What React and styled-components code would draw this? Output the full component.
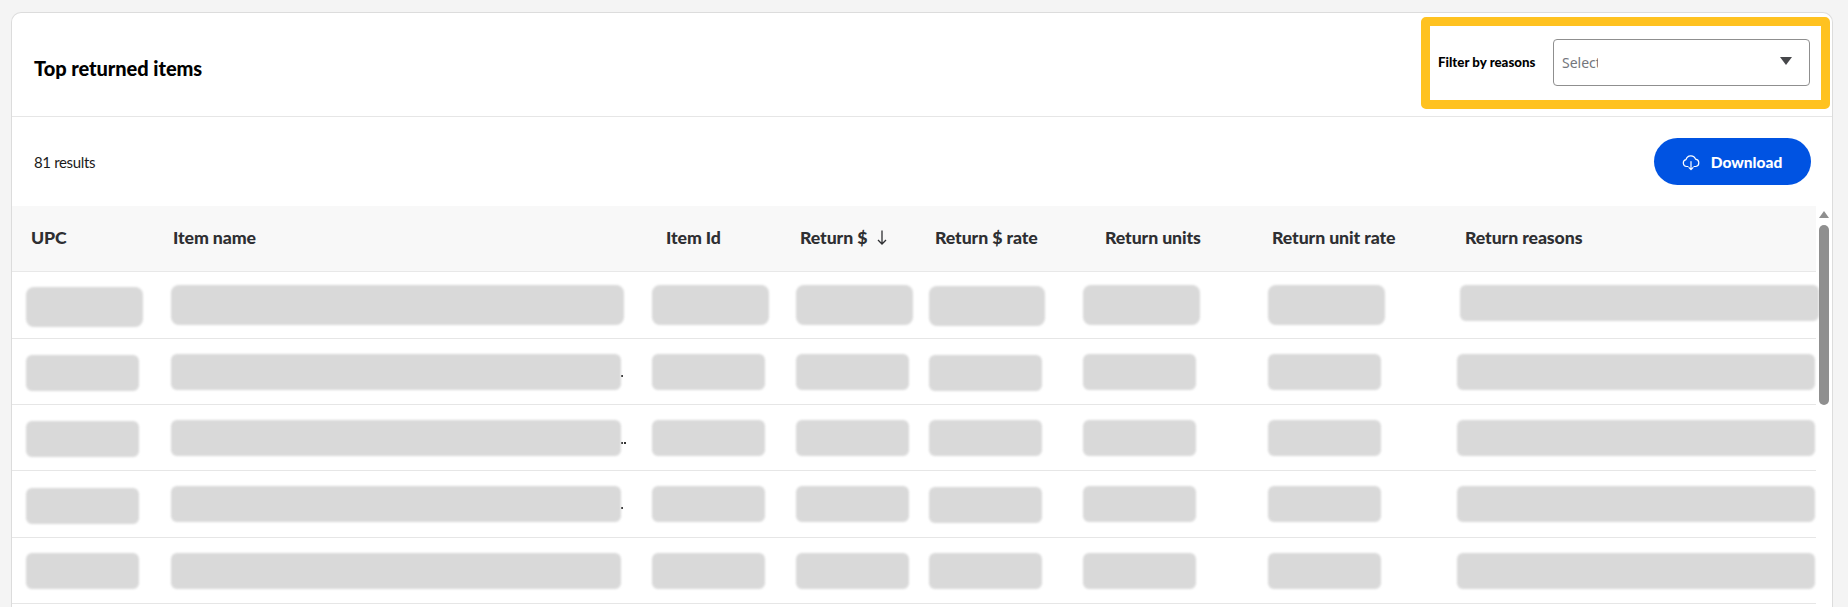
import React from "react";
import styled, { createGlobalStyle } from "styled-components";

const Global = createGlobalStyle`
  html, body { margin: 0; padding: 0; height: 607px; overflow: hidden; background: #f4f4f4; }
  body { font-family: Lato, "Noto Sans", sans-serif; color: #2e2f32; }
  * { box-sizing: border-box; }
`;

const Page = styled.div`
  padding: 12px 16px 0 11px;
  height: 607px;
  overflow: hidden;
`;
const Card = styled.section`
  background: #fff;
  border: 1.5px solid #dcdcdc;
  border-bottom: 0;
  border-radius: 10px 10px 0 0;
  width: 1822px;
  height: 640px;
`;
const Header = styled.header`
  display: flex;
  justify-content: space-between;
  align-items: center;
  height: 104px;
  padding: 0 2px 0 22px;
  border-bottom: 1.5px solid #e6e6e6;
`;
const Title = styled.h2`
  margin: 6px 0 0;
  font-size: 20px;
  font-weight: 900;
  letter-spacing: -0.05px;
  color: #000;
`;
const FilterBox = styled.div`
  display: flex;
  align-items: center;
  width: 409px;
  height: 92px;
  margin-top: -4px;
  padding: 0 10px 1px 8px;
  border: 9px solid #ffc220;
  border-radius: 5px;
  background: #fff;
`;
const FilterLabel = styled.label`
  width: 115px;
  flex: none;
  font-size: 13.3px;
  font-weight: 900;
  color: #000;
`;
const SelectBox = styled.div`
  display: flex;
  flex: none;
  align-items: center;
  justify-content: space-between;
  width: 257px;
  height: 47px;
  padding: 0 17px 0 8px;
  border: 1px solid #8f8f8f;
  border-radius: 4px;
`;
const Placeholder = styled.span`
  width: 36px;
  overflow: hidden;
  white-space: nowrap;
  font-family: "Noto Sans", sans-serif;
  font-size: 14px;
  color: #74767c;
`;
const Caret = styled.svg`
  margin-bottom: 2px;
`;
const Toolbar = styled.div`
  display: flex;
  justify-content: space-between;
  align-items: center;
  height: 89px;
  padding: 0 21px 0 22px;
`;
const Results = styled.span`
  font-size: 15px;
  letter-spacing: -0.35px;
  color: #1a1a1a;
`;
const DownloadButton = styled.button`
  display: flex;
  align-items: center;
  justify-content: center;
  gap: 11px;
  width: 157px;
  height: 47px;
  padding: 0 1px 0 0;
  border: 0;
  border-radius: 24px;
  background: #0053e2;
  color: #fff;
  font-family: Lato, sans-serif;
  font-size: 15.5px;
  font-weight: 900;
`;
const TableArea = styled.div`
  display: flex;
  align-items: flex-start;
`;
const Table = styled.div`
  width: 1804px;
  flex: none;
`;
const HeadRow = styled.div`
  display: grid;
  grid-template-columns: 142px 493px 134px 135px 170px 167px 193px 1fr;
  align-items: center;
  height: 66px;
  padding: 0 0 3px 19px;
  background: #f8f8f8;
  border-bottom: 1.5px solid #e8e8e8;
`;
const HeadCell = styled.div`
  display: flex;
  align-items: center;
  gap: 10px;
  font-size: 17.7px;
  font-weight: 900;
  color: #2e2f32;
  letter-spacing: -0.1px;
  white-space: nowrap;
`;
const Row = styled.div`
  display: flex;
  align-items: flex-start;
  height: ${(p) => p.$height}px;
  border-bottom: 1.5px solid #e6e6e6;
`;
const Block = styled.div`
  flex: none;
  width: ${(p) => p.$w}px;
  height: ${(p) => p.$h}px;
  margin-left: ${(p) => p.$gap}px;
  margin-top: ${(p) => p.$top}px;
  border-radius: ${(p) => (p.$h > 37 ? 8 : 6)}px;
  background: #d9d9d9;
  filter: blur(0.8px);
`;
const Dots = styled.span`
  flex: none;
  display: flex;
  gap: 1px;
  width: 0;
  margin-top: ${(p) => p.$top}px;
`;
const Dot = styled.i`
  flex: none;
  width: 2px;
  height: 2px;
  background: #333;
`;
const ScrollColumn = styled.div`
  display: flex;
  flex: none;
  flex-direction: column;
  align-items: center;
  width: 16px;
  padding: 5px 1px 0 0;
  position: relative;
`;
const ScrollArrow = styled.div`
  width: 0;
  height: 0;
  border-left: 5px solid transparent;
  border-right: 5px solid transparent;
  border-bottom: 7px solid #8f8f8f;
`;
const ScrollThumb = styled.div`
  width: 10px;
  height: 180px;
  margin-top: 7px;
  border-radius: 5px;
  background: #8f8f8f;
`;

const heads = ["UPC", "Item name", "Item Id", "Return $", "Return $ rate", "Return units", "Return unit rate", "Return reasons"];

const rows = [
  { height: 67, h: 40, d: 0, b: [[14, 116.5, 15], [28.5, 453, 13], [28, 116.5, 13], [27.5, 116.5, 13], [16, 116.5, 14], [38, 116.5, 13], [68.5, 116.5, 13], [75.5, 359, 13, 36]] },
  { height: 66.2, h: 36, d: 1, t: 36, b: [[14, 113, 16], [32, 449.5, 15], [31, 113.5, 15], [30.5, 113.5, 15], [19.5, 113.5, 16], [40.5, 113.5, 15], [71.5, 113.5, 15], [75.5, 358.5, 15]] },
  { height: 66.2, h: 36, d: 2, t: 37, b: [[14, 113, 16], [32, 449.5, 15], [31, 113.5, 15], [30.5, 113.5, 15], [19.5, 113.5, 15], [40.5, 113.5, 15], [71.5, 113.5, 15], [75.5, 358.5, 15]] },
  { height: 66.2, h: 36, d: 1, t: 36, b: [[14, 113, 17], [32, 449.5, 15], [31, 113.5, 15], [30.5, 113.5, 15], [19.5, 113.5, 16], [40.5, 113.5, 15], [71.5, 113.5, 15], [75.5, 358.5, 15]] },
  { height: 66.2, h: 36, d: 0, b: [[14, 113, 15], [32, 449.5, 15], [31, 113.5, 15], [30.5, 113.5, 15], [19.5, 113.5, 15], [40.5, 113.5, 15], [71.5, 113.5, 15], [75.5, 358.5, 15]] },
];

export default function App() {
  return (
    <Page>
      <Global />
      <Card>
        <Header>
          <Title>Top returned items</Title>
          <FilterBox>
            <FilterLabel>Filter by reasons</FilterLabel>
            <SelectBox>
              <Placeholder>Select</Placeholder>
              <Caret width="12" height="8" viewBox="0 0 12 8" aria-hidden="true">
                <path d="M0 0h12L6 8z" fill="#46474a" />
              </Caret>
            </SelectBox>
          </FilterBox>
        </Header>
        <Toolbar>
          <Results>81 results</Results>
          <DownloadButton>
            <svg width="18" height="18" viewBox="0 0 18 18" fill="none" stroke="currentColor" strokeWidth="1.2" strokeLinecap="round" strokeLinejoin="round" aria-hidden="true">
              <path d="M6 13.5H4.6A3.5 3.5 0 0 1 4 6.6 5 5 0 0 1 13.6 6.2 3.7 3.7 0 0 1 13.8 13.5H12" />
              <path d="M9 8.5V16.5M7 14.6L9 16.6 11 14.6" />
            </svg>
            Download
          </DownloadButton>
        </Toolbar>
        <TableArea>
          <Table>
            <HeadRow>
              {heads.map((h) => (
                <HeadCell key={h}>
                  {h}
                  {h === "Return $" && (
                    <svg width="10" height="15" viewBox="0 0 10 15" fill="none" stroke="currentColor" strokeWidth="1.3" aria-hidden="true">
                      <path d="M5 0.5V14M1 10L5 14 9 10" />
                    </svg>
                  )}
                </HeadCell>
              ))}
            </HeadRow>
            {rows.map((r, i) => (
              <Row key={i} $height={r.height}>
                {r.b.map((c, j) => (
                  <React.Fragment key={j}>
                    <Block $gap={c[0]} $w={c[1]} $top={c[2]} $h={c[3] || r.h} />
                    {j === 1 && r.d > 0 && (
                      <Dots $top={r.t}>
                        {Array.from({ length: r.d }, (_, k) => (
                          <Dot key={k} />
                        ))}
                      </Dots>
                    )}
                  </React.Fragment>
                ))}
              </Row>
            ))}
          </Table>
          <ScrollColumn>
            <ScrollArrow />
            <ScrollThumb />
          </ScrollColumn>
        </TableArea>
      </Card>
    </Page>
  );
}
